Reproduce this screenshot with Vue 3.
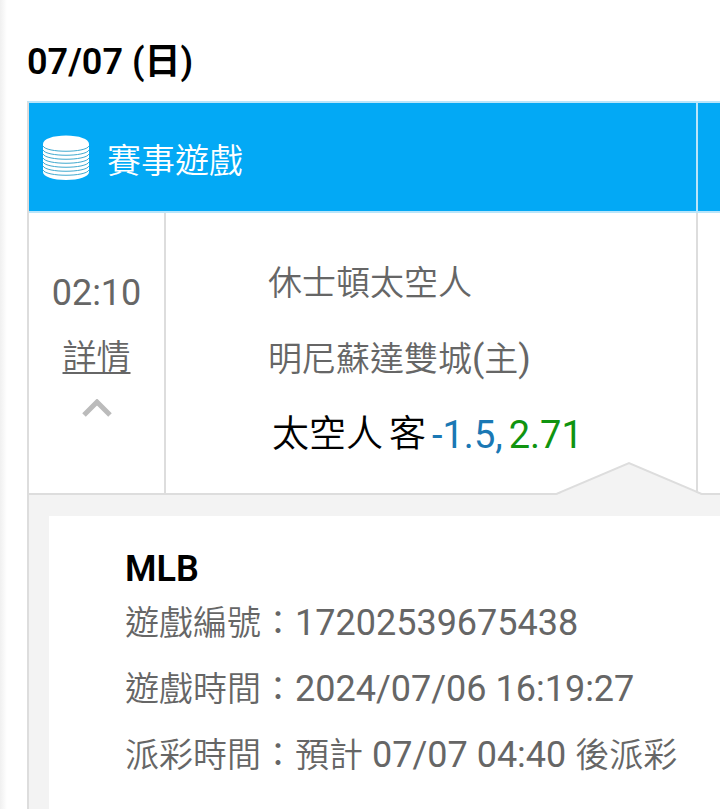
<script setup>
import { ref } from 'vue'

const isOpen = ref(true)
const stackLines = [16, 20, 24, 28, 32, 36, 40]
const details = [
    { label: '遊戲編號：', parts: [{ text: '17202539675438', latin: true }] },
    { label: '遊戲時間：', parts: [{ text: '2024/07/06 16:19:27', latin: true }] },
    { label: '派彩時間：', parts: [
        { text: '預計' },
        { text: ' 07/07 04:40 ', latin: true },
        { text: '後派彩' }
    ] }
]

function toggleDetail() {
    isOpen.value = !isOpen.value
}
</script>

<template>
    <main class="page">
        <h2 class="date">07/07 (日)</h2>
        <table class="bet-table">
            <colgroup>
                <col class="col-time">
                <col>
                <col class="col-next">
            </colgroup>
            <thead>
                <tr>
                    <th colspan="2">
                        <div class="title">
                            <svg class="coins" viewBox="0 0 46 46" aria-hidden="true">
                                <path d="M0 9C0 4 10 0.5 23 0.5S46 4 46 9V37C46 41.500 36 45 23 45S0 41.500 0 37Z" fill="#fff" />
                                <path v-for="y in stackLines" :key="y" :d="`M0 ${y - 5}C3 ${y + 2} 43 ${y + 2} 46 ${y - 5}`"
                                    fill="none" stroke="#3fa9cf" stroke-width="1" />
                            </svg>
                            <span>賽事遊戲</span>
                        </div>
                    </th>
                    <th></th>
                </tr>
            </thead>
            <tbody>
                <tr class="game-row">
                    <td class="time">
                        <div class="latin">02:10</div>
                        <a href="#" @click.prevent="toggleDetail">詳情</a>
                        <svg class="chevron" :class="{ closed: !isOpen }" viewBox="0 0 30 18" aria-hidden="true">
                            <path d="M2 16L15 3L28 16" fill="none" stroke="#bbb" stroke-width="5" />
                        </svg>
                    </td>
                    <td class="game">
                        <div>休士頓太空人</div>
                        <div>明尼蘇達雙城<span class="latin">(</span>主<span class="latin">)</span></div>
                        <div class="pick">
                            <span>太空人</span>
                            <span>客</span>
                            <span class="odds"><span class="handicap">-1.5,</span><span class="rate">2.71</span></span>
                        </div>
                    </td>
                    <td></td>
                </tr>
                <tr v-if="isOpen">
                    <td class="detail-cell" colspan="3">
                        <svg class="pointer" viewBox="0 0 146 34" aria-hidden="true">
                            <path d="M0 34L73 2L146 34Z" fill="#f3f3f3" />
                            <path d="M0 33L73 2L146 33" fill="none" stroke="#ddd" stroke-width="2" />
                        </svg>
                        <div class="detail">
                            <h3>MLB</h3>
                            <p v-for="item in details" :key="item.label">
                                {{ item.label }}<span v-for="part in item.parts" :key="part.text" :class="{ latin: part.latin }">{{ part.text }}</span>
                            </p>
                        </div>
                    </td>
                </tr>
            </tbody>
        </table>
    </main>
</template>

<style>
body {
    margin: 0;
    background-color: #fff;
}
</style>

<style scoped>
.page {
    box-sizing: border-box;
    min-height: 100vh;
    padding: 36px 0 0 27px;
    overflow: hidden;
    font-family: Roboto, "Noto Sans CJK TC", sans-serif;
    font-size: 34px;
    font-weight: 350;
    color: #666;
    background: linear-gradient(to right, #f0f0f0, #fff 7px);
}
.latin {
    font-size: 36px;
    font-weight: 400;
    white-space: pre-wrap;
}
.date {
    margin: 0 0 13px;
    font-size: 36px;
    line-height: 52px;
    font-weight: 600;
    color: #000;
}
.bet-table {
    width: 100%;
    table-layout: fixed;
    border-collapse: separate;
    border-spacing: 0;
    border-top: 2px solid #b9e5fa;
    border-left: 2px solid #ddd;
}
.col-time {
    width: 137px;
}
.col-next {
    width: 22px;
}
th, td {
    padding: 0;
    border-right: 2px solid #ddd;
    border-bottom: 2px solid #ddd;
}
th {
    height: 106px;
    padding-top: 2px;
    color: #fff;
    font-weight: 350;
    text-align: left;
    background-color: #03a9f5;
    border-color: #b9e5fa;
}
tr > :last-child {
    border-right: 0;
}
.title {
    display: flex;
    align-items: center;
    gap: 18px;
    padding-left: 14px;
}
.coins {
    width: 46px;
    height: 46px;
}
.game-row td {
    height: 280px;
    vertical-align: top;
}
.time {
    text-align: center;
    line-height: 64px;
}
.time .latin {
    margin-top: 48px;
}
.time a {
    display: block;
    color: #666;
    text-decoration: underline;
    text-decoration-thickness: 2px;
    text-underline-offset: 3px;
}
.chevron {
    display: block;
    width: 30px;
    height: 18px;
    margin: 10px auto 0;
}
.chevron.closed {
    transform: rotate(180deg);
}
.game > div {
    padding-left: 102px;
    line-height: 76px;
    white-space: nowrap;
}
.game > div:first-child {
    margin-top: 32px;
}
.game > .pick {
    display: flex;
    gap: 6px;
    padding-left: 106px;
    font-size: 37px;
    color: #000;
}
.odds {
    display: flex;
    gap: 6px;
    font-size: 38px;
    font-weight: 400;
}
.handicap {
    color: #1a78b4;
}
.rate {
    color: #109410;
}
.detail-cell {
    position: relative;
    padding: 21px 0 21px 20px;
    border-bottom: 2px solid #ddd;
    background-color: #f3f3f3;
}
.pointer {
    position: absolute;
    right: 18px;
    bottom: 100%;
    width: 146px;
    height: 34px;
}
.detail {
    padding: 32px 0 32px 76px;
    background-color: #fff;
}
.detail h3 {
    margin: 0;
    font-size: 36px;
    line-height: 42px;
    font-weight: 600;
    color: #000;
}
.detail p {
    margin: 0;
    line-height: 66px;
    white-space: nowrap;
}
</style>
